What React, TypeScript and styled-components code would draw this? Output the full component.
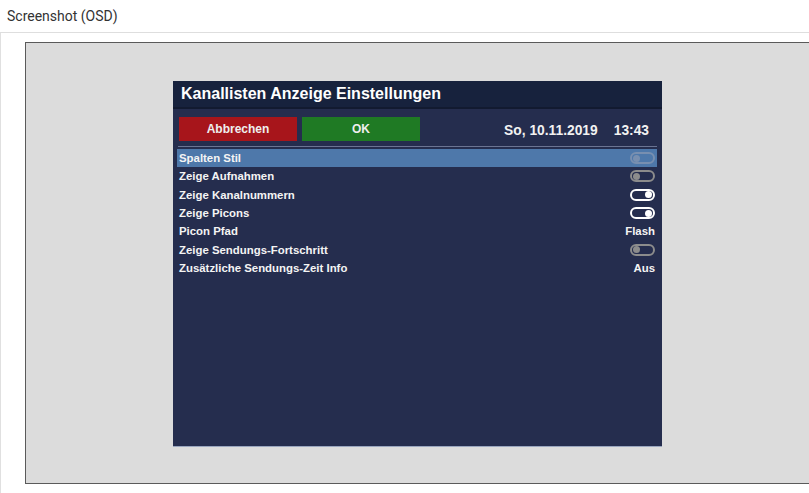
import React from "react";
import styled, { createGlobalStyle } from "styled-components";

const Global = createGlobalStyle`
  html, body { margin: 0; padding: 0; background: #fff; overflow: hidden; }
  body { font-family: Roboto, "Liberation Sans", sans-serif; }
`;

const Page = styled.div`
  width: 809px;
  height: 493px;
  display: flex;
  flex-direction: column;
  overflow: hidden;
`;

const Header = styled.div`
  height: 32px;
  border-bottom: 1px solid #dedede;
  display: flex;
  align-items: center;
  padding-left: 7px;
  font-size: 14px;
  color: #333;
`;

const Body = styled.div`
  flex: 1;
  border-left: 1px solid #e0e0e0;
  padding: 9px 0 0 24px;
`;

const Screen = styled.div`
  width: 820px;
  height: 442px;
  border: 1px solid #5a5a5a;
  background: #dcdcdc;
  padding: 38px 0 0 147px;
  box-sizing: border-box;
`;

const Osd = styled.div`
  width: 489px;
  height: 365px;
  background: #252d4e;
  display: flex;
  flex-direction: column;
  font-family: "Liberation Sans", Arial, sans-serif;
  font-weight: bold;
  color: #fff;
  box-shadow: 0 1px 0 #9aa6bf;
`;

const TitleBar = styled.div`
  height: 26px;
  background: #17223d;
  border-bottom: 2px solid #121a30;
  display: flex;
  align-items: center;
  padding-left: 8px;
  font-size: 16px;
`;

const Toolbar = styled.div`
  display: flex;
  align-items: center;
  gap: 5px;
  padding: 8px 13px 0 6px;
  height: 24px;
`;

const Btn = styled.div<{ $c: string }>`
  width: 118px;
  height: 24px;
  background: ${(p) => p.$c};
  display: flex;
  align-items: center;
  justify-content: center;
  font-size: 12px;
  color: #eee;
`;

const Clock = styled.div`
  margin-left: auto;
  display: flex;
  gap: 16px;
  font-size: 13.8px;
  color: #f2f2f2;
  padding-top: 2px;
`;

const Sep = styled.div`
  margin: 5px 5px 0 5px;
  height: 1px;
  background: #6b7492;
`;

const List = styled.div`
  padding: 2px 5px 0 4px;
  display: flex;
  flex-direction: column;
`;

const Row = styled.div<{ $sel?: boolean }>`
  height: 18.3px;
  display: flex;
  align-items: center;
  justify-content: space-between;
  padding: 0 2px;
  background: ${(p) => (p.$sel ? "#4e78aa" : "transparent")};
  font-size: 11.4px;
  color: #f4f4f4;
`;

const Toggle = styled.div<{ $on?: boolean; $dim?: boolean }>`
  width: 19px;
  height: 8px;
  border: 2px solid ${(p) => (p.$dim ? "#8a9ab3" : p.$on ? "#ffffff" : "#8c8c8c")};
  border-radius: 7px;
  display: flex;
  align-items: center;
  justify-content: ${(p) => (p.$on ? "flex-end" : "flex-start")};
  padding: 0 1px;
  opacity: ${(p) => (p.$dim ? 0.7 : 1)};
`;

const Knob = styled.div<{ $on?: boolean; $dim?: boolean }>`
  width: 7px;
  height: 7px;
  border-radius: 50%;
  background: ${(p) => (p.$dim ? "#8a9ab3" : p.$on ? "#ffffff" : "#8c8c8c")};
`;

type Item = { label: string; toggle?: boolean; on?: boolean; value?: string };

const items: Item[] = [
  { label: "Spalten Stil", toggle: true, on: false },
  { label: "Zeige Aufnahmen", toggle: true, on: false },
  { label: "Zeige Kanalnummern", toggle: true, on: true },
  { label: "Zeige Picons", toggle: true, on: true },
  { label: "Picon Pfad", value: "Flash" },
  { label: "Zeige Sendungs-Fortschritt", toggle: true, on: false },
  { label: "Zusätzliche Sendungs-Zeit Info", value: "Aus" },
];

export default function App() {
  return (
    <Page>
      <Global />
      <Header>Screenshot (OSD)</Header>
      <Body>
        <Screen>
          <Osd>
            <TitleBar>Kanallisten Anzeige Einstellungen</TitleBar>
            <Toolbar>
              <Btn $c="#a7151b">Abbrechen</Btn>
              <Btn $c="#1f7a24">OK</Btn>
              <Clock>
                <span>So, 10.11.2019</span>
                <span>13:43</span>
              </Clock>
            </Toolbar>
            <Sep />
            <List>
              {items.map((it, i) => (
                <Row key={it.label} $sel={i === 0}>
                  <span>{it.label}</span>
                  {it.toggle ? (
                    <Toggle $on={it.on} $dim={i === 0}>
                      <Knob $on={it.on} $dim={i === 0} />
                    </Toggle>
                  ) : (
                    <span>{it.value}</span>
                  )}
                </Row>
              ))}
            </List>
          </Osd>
        </Screen>
      </Body>
    </Page>
  );
}
